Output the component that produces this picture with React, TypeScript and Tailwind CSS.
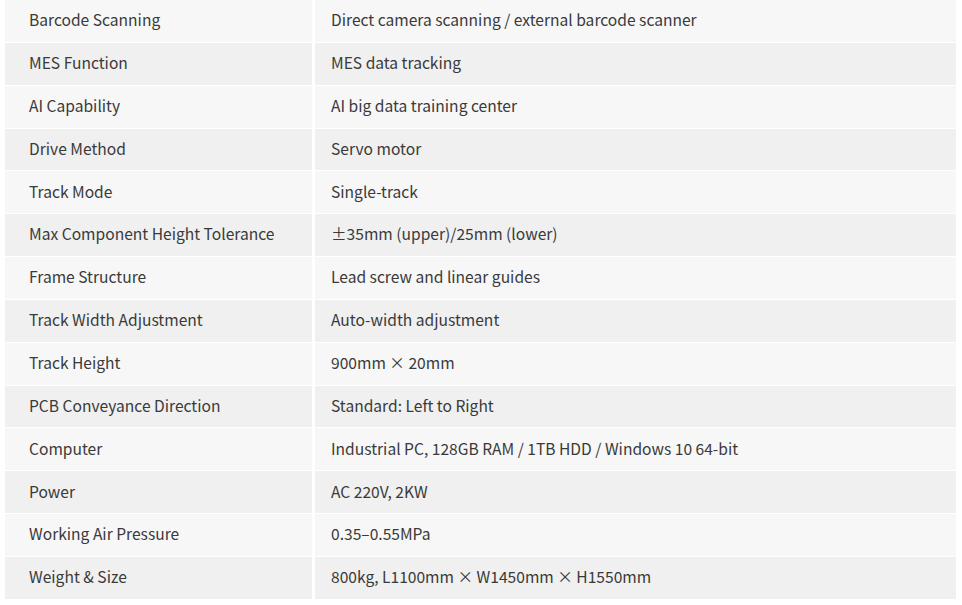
import React from 'react'

const specs: [string, string][] = [
    ['Barcode Scanning', 'Direct camera scanning / external barcode scanner'],
    ['MES Function', 'MES data tracking'],
    ['AI Capability', 'AI big data training center'],
    ['Drive Method', 'Servo motor'],
    ['Track Mode', 'Single-track'],
    ['Max Component Height Tolerance', '±35mm (upper)/25mm (lower)'],
    ['Frame Structure', 'Lead screw and linear guides'],
    ['Track Width Adjustment', 'Auto-width adjustment'],
    ['Track Height', '900mm × 20mm'],
    ['PCB Conveyance Direction', 'Standard: Left to Right'],
    ['Computer', 'Industrial PC, 128GB RAM / 1TB HDD / Windows 10 64-bit'],
    ['Power', 'AC 220V, 2KW'],
    ['Working Air Pressure', '0.35–0.55MPa'],
    ['Weight & Size', '800kg, L1100mm × W1450mm × H1550mm'],
]

export default function App() {
    return (
        <div className="w-[962px] h-[605px] bg-white overflow-hidden pl-[5px] pr-[6px] font-['Noto_Sans_CJK_SC',sans-serif] text-[15.6px] text-[#3a3a3a]">
            <div className="flex flex-col gap-y-px">
                {specs.map(([label, value], i) => (
                    <div
                        key={label}
                        className={`flex h-[41.85px] ${i % 2 === 0 ? 'bg-[#f7f7f7]' : 'bg-[#f0f0f0]'}`}
                    >
                        <div className="w-[307px] flex items-center pl-6 pb-[2px]">{label}</div>
                        <div className="flex-1 flex items-center pl-4 pb-[2px] border-l-[3px] border-white">{value}</div>
                    </div>
                ))}
            </div>
        </div>
    )
}
